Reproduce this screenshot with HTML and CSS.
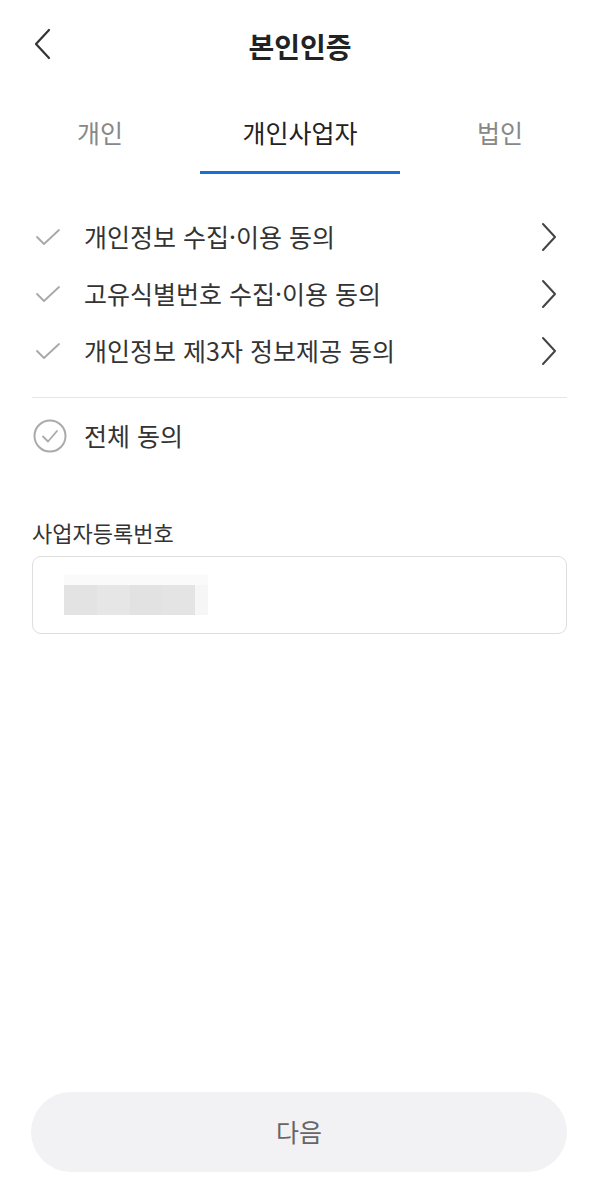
FILE: index.html
```html
<!DOCTYPE html>
<html lang="ko">
<head>
    <meta charset="UTF-8">
    <meta name="viewport" content="width=device-width, initial-scale=1.0">
    <title>본인인증</title>
    <link rel="stylesheet" href="styles.css">
</head>
<body>
    <div class="page">
        <header class="header">
            <button type="button" class="back" aria-label="뒤로">
                <svg width="20" height="32" viewBox="0 0 20 32"><path d="M16 2 L3 16 L16 30" fill="none" stroke="#333" stroke-width="2.2" stroke-linecap="round" stroke-linejoin="round"/></svg>
            </button>
            <h1>본인인증</h1>
        </header>

        <nav class="tabs">
            <div class="tab">개인</div>
            <div class="tab active">개인사업자</div>
            <div class="tab">법인</div>
        </nav>

        <ul class="terms">
            <li class="term">
                <svg class="check" width="26" height="20" viewBox="0 0 26 20"><path d="M2 10 L9 17 L24 3" fill="none" stroke="#a8a8a8" stroke-width="1.8" stroke-linecap="round" stroke-linejoin="round"/></svg>
                <span>개인정보 수집·이용 동의</span>
                <svg class="more" width="18" height="30" viewBox="0 0 18 30"><path d="M3 2 L15 15 L3 28" fill="none" stroke="#444" stroke-width="2" stroke-linecap="round" stroke-linejoin="round"/></svg>
            </li>
            <li class="term">
                <svg class="check" width="26" height="20" viewBox="0 0 26 20"><path d="M2 10 L9 17 L24 3" fill="none" stroke="#a8a8a8" stroke-width="1.8" stroke-linecap="round" stroke-linejoin="round"/></svg>
                <span>고유식별번호 수집·이용 동의</span>
                <svg class="more" width="18" height="30" viewBox="0 0 18 30"><path d="M3 2 L15 15 L3 28" fill="none" stroke="#444" stroke-width="2" stroke-linecap="round" stroke-linejoin="round"/></svg>
            </li>
            <li class="term">
                <svg class="check" width="26" height="20" viewBox="0 0 26 20"><path d="M2 10 L9 17 L24 3" fill="none" stroke="#a8a8a8" stroke-width="1.8" stroke-linecap="round" stroke-linejoin="round"/></svg>
                <span>개인정보 제3자 정보제공 동의</span>
                <svg class="more" width="18" height="30" viewBox="0 0 18 30"><path d="M3 2 L15 15 L3 28" fill="none" stroke="#444" stroke-width="2" stroke-linecap="round" stroke-linejoin="round"/></svg>
            </li>
        </ul>

        <div class="divider"></div>

        <div class="all-agree">
            <svg class="circle" width="34" height="34" viewBox="0 0 34 34">
                <circle cx="17" cy="17" r="15.5" fill="none" stroke="#aaa" stroke-width="2"/>
                <path d="M10 17.5 L15 22.5 L24 12" fill="none" stroke="#aaa" stroke-width="1.8" stroke-linecap="round" stroke-linejoin="round"/>
            </svg>
            <span>전체 동의</span>
        </div>

        <label class="field-label">사업자등록번호</label>
        <div class="field">
            <div class="masked">
                <div class="masked-top"></div>
                <div class="masked-row">
                    <div class="px px1"></div>
                    <div class="px px2"></div>
                    <div class="px px3"></div>
                    <div class="px px4"></div>
                    <div class="px px5"></div>
                </div>
            </div>
        </div>

        <button type="button" class="next">다음</button>
    </div>
</body>
</html>
```

FILE: styles.css
```css
* {
    margin: 0;
    padding: 0;
    box-sizing: border-box;
    font-family: "Noto Sans CJK KR", "Noto Sans", sans-serif;
}

body {
    background: #fff;
}

.page {
    width: 600px;
    height: 1190px;
    display: flex;
    flex-direction: column;
}

.header {
    position: relative;
    height: 92px;
    display: flex;
    align-items: center;
    justify-content: center;
}

.header h1 {
    font-size: 28px;
    font-weight: 700;
    color: #222;
    line-height: 34px;
}

.back {
    position: absolute;
    left: 33px;
    top: 28px;
    border: none;
    background: none;
    display: flex;
}

.tabs {
    display: flex;
}

.tab {
    flex: 1;
    text-align: center;
    font-size: 25px;
    line-height: 32px;
    color: #888;
    padding: 24px 0 23px;
    border-bottom: 3px solid transparent;
}

.tab.active {
    color: #222;
    border-bottom-color: #1a6fd6;
}

.terms {
    list-style: none;
    padding: 33px 32px 0 35px;
}

.term {
    height: 57px;
    display: flex;
    align-items: center;
    font-size: 25px;
    color: #333;
}

.term .check {
    margin-top: 2px;
}

.term span {
    flex: 1;
    margin-left: 23px;
}

.term .more {
    margin: 2px 10px 0 0;
}

.divider {
    height: 1px;
    background: #e6e6e6;
    margin: 19px 33px 0 32px;
}

.all-agree {
    height: 76px;
    display: flex;
    align-items: center;
    padding-left: 33px;
    font-size: 25px;
    color: #333;
}

.all-agree span {
    margin: 0 0 3px 17px;
}

.field-label {
    margin: 43px 0 0 32px;
    font-size: 22px;
    line-height: 30px;
    color: #333;
}

.field {
    margin: 9px 33px 0 32px;
    height: 78px;
    border: 1.5px solid #dedede;
    border-radius: 9px;
    display: flex;
    align-items: center;
    padding-left: 31px;
}

.masked {
    width: 144px;
    display: flex;
    flex-direction: column;
}

.masked-top {
    height: 10px;
    background: #fafafa;
}

.masked-row {
    height: 30px;
    display: flex;
}

.px {
    height: 100%;
}

.px1 { width: 33px; background: #e3e3e3; }
.px2 { width: 33px; background: #e6e6e6; }
.px3 { width: 32px; background: #e2e2e2; }
.px4 { width: 33px; background: #e4e4e4; }
.px5 { width: 13px; background: #f6f6f6; }

.next {
    margin: auto 33px 18px 31px;
    height: 80px;
    border: none;
    border-radius: 40px;
    background: #f2f2f4;
    font-size: 25px;
    color: #666;
    padding-bottom: 2px;
}
```
